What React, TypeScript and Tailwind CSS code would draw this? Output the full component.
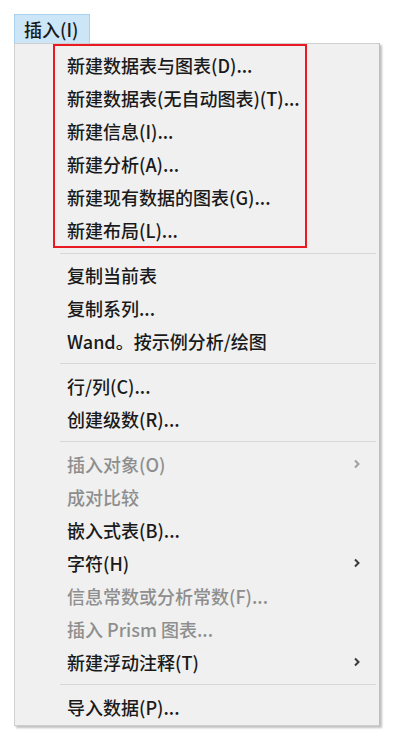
import React from "react";

type Item = { label: string; disabled?: boolean; submenu?: boolean };

const BOXED: Item[] = [
  { label: "新建数据表与图表(D)..." },
  { label: "新建数据表(无自动图表)(T)..." },
  { label: "新建信息(I)..." },
  { label: "新建分析(A)..." },
  { label: "新建现有数据的图表(G)..." },
  { label: "新建布局(L)..." },
];

const GROUPS: Item[][] = [
  [{ label: "复制当前表" }, { label: "复制系列..." }, { label: "Wand。按示例分析/绘图" }],
  [{ label: "行/列(C)..." }, { label: "创建级数(R)..." }],
  [
    { label: "插入对象(O)", disabled: true, submenu: true },
    { label: "成对比较", disabled: true },
    { label: "嵌入式表(B)..." },
    { label: "字符(H)", submenu: true },
    { label: "信息常数或分析常数(F)...", disabled: true },
    { label: "插入 Prism 图表...", disabled: true },
    { label: "新建浮动注释(T)", submenu: true },
  ],
  [{ label: "导入数据(P)..." }],
];

function Chevron({ disabled }: { disabled?: boolean }) {
  return (
    <svg width="8" height="12" viewBox="0 0 8 12" className="absolute right-[18px] top-1/2 -translate-y-1/2">
      <path
        d="M2 2.5 L5.5 6 L2 9.5"
        fill="none"
        stroke={disabled ? "#a0a0a0" : "#3a3a3a"}
        strokeWidth="2"
      />
    </svg>
  );
}

function Row({ item, boxed }: { item: Item; boxed?: boolean }) {
  return (
    <div
      className={
        "relative flex h-[33px] items-center whitespace-nowrap " +
        (boxed ? "pl-3" : "pl-[52px]") +
        (item.disabled ? " text-[#8e8e8e]" : " text-[#1a1a1a]")
      }
    >
      {item.label}
      {item.submenu && <Chevron disabled={item.disabled} />}
    </div>
  );
}

function Separator({ first }: { first?: boolean }) {
  return (
    <div className={"flex items-center ml-[45px] mr-[3px] " + (first ? "h-[10px]" : "h-[12px]")}>
      <div className="h-px w-full bg-[#d7d7d7]" />
    </div>
  );
}

export default function App() {
  return (
    <div
      className="min-h-[749px] w-[410px] bg-white pt-[14px] pl-[14px] text-[18px] font-medium leading-none"
      style={{ fontFamily: '"Noto Sans CJK SC", sans-serif' }}
    >
      {/* menu bar entry */}
      <div className="flex h-[29px] w-[76px] items-center border border-b-0 border-[#a9d1f0] bg-[#cde6f7] pl-[9px] text-[#1a1a1a]">
        插入(I)
      </div>

      {/* dropdown */}
      <div className="w-[366px] border border-[#cfcfcf] border-r-[#bdbdbd] bg-[#f0f0f0] pb-[2px] shadow-[2px_2px_2px_rgba(0,0,0,0.25)]">
        <div className="ml-[38px] w-[254px] border-2 border-[#ea1a22] pt-[2px]">
          {BOXED.map((it) => (
            <Row key={it.label} item={it} boxed />
          ))}
        </div>
        {GROUPS.map((group, gi) => (
          <div key={gi}>
            <Separator first={gi === 0} />
            {group.map((it) => (
              <Row key={it.label} item={it} />
            ))}
          </div>
        ))}
      </div>
    </div>
  );
}
